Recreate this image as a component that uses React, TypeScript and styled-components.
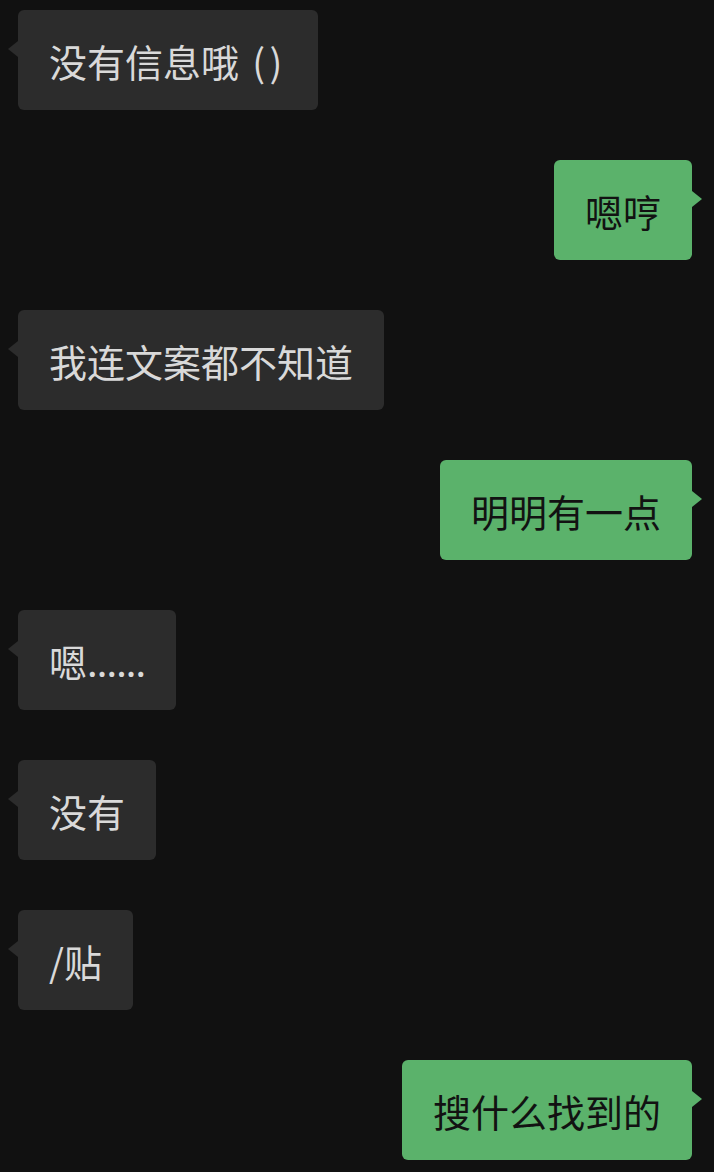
import React, { FC } from 'react';
import styled, { createGlobalStyle, css } from 'styled-components';

const GlobalStyle = createGlobalStyle`
  html, body {
    margin: 0;
    padding: 0;
    background: #111111;
  }
`;

const Chat = styled.div`
  display: flex;
  flex-direction: column;
  gap: 50px;
  padding: 10px 22px 12px 18px;
  font-family: 'Noto Sans CJK SC', 'Liberation Sans', sans-serif;
`;

const Row = styled.div<{ mine: boolean }>`
  display: flex;
  justify-content: ${props => (props.mine ? 'flex-end' : 'flex-start')};
`;

const Bubble = styled.div<{ mine: boolean }>`
  position: relative;
  height: 100px;
  display: flex;
  align-items: center;
  padding: 0 31px;
  border-radius: 6px;
  font-size: 38px;
  white-space: pre;
  background: ${props => (props.mine ? '#5bb26b' : '#2c2c2c')};
  color: ${props => (props.mine ? '#121212' : '#d9d9d9')};

  &::after {
    content: '';
    position: absolute;
    top: 31px;
    border-top: 8px solid transparent;
    border-bottom: 8px solid transparent;
    ${props =>
      props.mine
        ? css`
            right: -10px;
            border-left: 10px solid #5bb26b;
          `
        : css`
            left: -10px;
            border-right: 10px solid #2c2c2c;
          `}
  }
`;

// latin bits render a touch wider/narrower on the phone font
const Latin = styled.span<{ spacing: number }>`
  letter-spacing: ${props => props.spacing}px;
`;

type Message = { text: string; tail?: string; spacing?: number; mine: boolean };

const messages: Message[] = [
  { text: '没有信息哦', tail: ' ()', spacing: 4.6, mine: false },
  { text: '嗯哼', mine: true },
  { text: '我连文案都不知道', mine: false },
  { text: '明明有一点', mine: true },
  { text: '嗯', tail: '......', spacing: -0.85, mine: false },
  { text: '没有', mine: false },
  { text: '/贴', mine: false },
  { text: '搜什么找到的', mine: true },
];

const App: FC = () => (
  <>
    <GlobalStyle />
    <Chat>
      {messages.map((m, i) => (
        <Row key={i} mine={m.mine}>
          <Bubble mine={m.mine}>
            {m.text}
            {m.tail && <Latin spacing={m.spacing ?? 0}>{m.tail}</Latin>}
          </Bubble>
        </Row>
      ))}
    </Chat>
  </>
);

export default App;
